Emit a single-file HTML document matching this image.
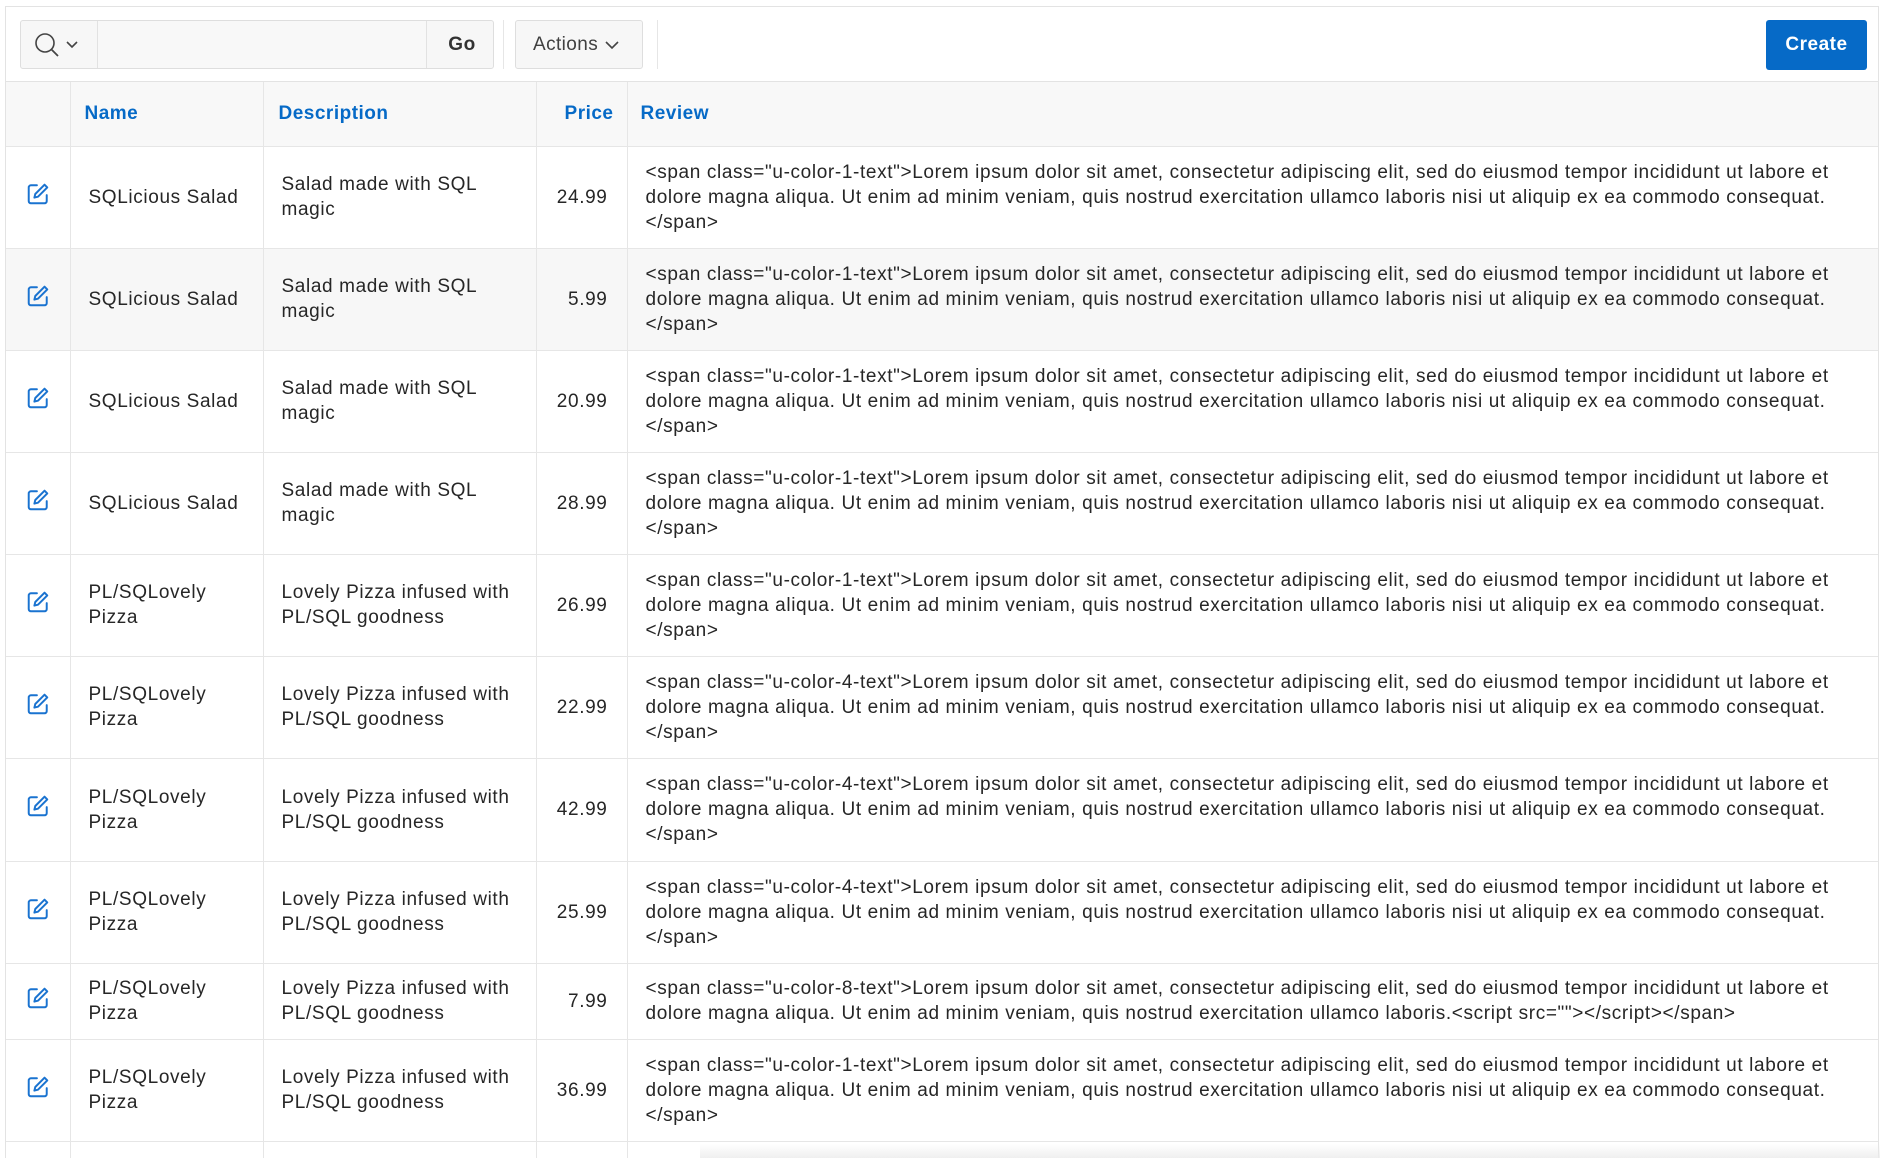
<!DOCTYPE html>
<html><head><meta charset="utf-8"><style>
*{box-sizing:border-box;margin:0;padding:0}
html,body{width:1880px;height:1158px;overflow:hidden}
body{background:#fff;font-family:"Liberation Sans",sans-serif;color:#262626;font-size:19px;letter-spacing:0.63px;position:relative}
.frame{position:absolute;left:5px;top:6px;width:1874px;height:1152px;border:1px solid #e3e3e3;border-bottom:none;background:#fff;overflow:hidden}
.tb{position:absolute;left:0;top:0;width:100%;height:75px;border-bottom:1px solid #e3e3e3}
.sg{position:absolute;left:14px;top:13px;width:474px;height:49px;border:1px solid #dedede;border-radius:3px;background:#f7f7f7}
.sg .in{position:absolute;left:76px;top:0;width:330px;height:47px;background:#f8f8f8;border-left:1px solid #e2e2e2;border-right:1px solid #e2e2e2}
.go{position:absolute;right:0;top:0;width:62px;height:47px;text-align:center;line-height:47px;font-weight:bold;font-size:19px;color:#333;letter-spacing:0.5px}
.sep{position:absolute;top:13px;width:1px;height:49px;background:#e6e6e6}
.act{position:absolute;left:509px;top:13px;width:128px;height:49px;border:1px solid #dedede;border-radius:3px;background:#f7f7f7;line-height:47px;padding-left:17px;font-size:19px;color:#404040;letter-spacing:0.4px}
.cr{position:absolute;left:1760px;top:13px;width:101px;height:50px;background:#066ac7;border-radius:3px;color:#fff;font-weight:bold;font-size:19px;text-align:center;line-height:50px;letter-spacing:0.5px}
table{position:absolute;left:0;top:75px;border-collapse:collapse;table-layout:fixed;width:1874px}
th,td{border:1px solid #e6e6e6;vertical-align:middle;line-height:25px}
tr>*:first-child{border-left:none}
th{height:64px;background:#f8f8f8;color:#066ac7;font-weight:bold;text-align:left;padding:0 14px;font-size:19px;border-top:none;letter-spacing:0.5px}
td{padding:0 18px;white-space:nowrap}
td.p,th.p{text-align:right;padding-right:19px}
td.e{padding:0;text-align:center}
tr.g td{background:#f7f7f7}
.shade{position:absolute;left:700px;bottom:0;width:1180px;height:14px;background:linear-gradient(rgba(255,255,255,0),rgba(235,235,235,.8))}
</style></head><body>
<div class="frame">
<div class="tb">
 <div class="sg">
  <svg style="position:absolute;left:12px;top:10px" width="54" height="28" viewBox="0 0 54 28"><circle cx="12" cy="12" r="9" fill="none" stroke="#444" stroke-width="1.6"/><line x1="18.5" y1="18.5" x2="25" y2="25" stroke="#444" stroke-width="1.8"/><polyline points="34,11 39,16 44,11" fill="none" stroke="#444" stroke-width="1.6"/></svg>
  <div class="in"></div>
  <div class="go">Go</div>
 </div>
 <div class="sep" style="left:497px"></div>
 <div class="act">Actions <svg width="16" height="10" viewBox="0 0 16 10"><polyline points="2,2 8,8 14,2" fill="none" stroke="#444" stroke-width="1.6"/></svg></div>
 <div class="sep" style="left:651px"></div>
 <div class="cr">Create</div>
</div>
<table>
<colgroup><col style="width:64px"><col style="width:193px"><col style="width:273px"><col style="width:91px"><col></colgroup>
<tbody>
<tr><th></th><th>Name</th><th style="padding-left:15px">Description</th><th class="p" style="padding-right:13px">Price</th><th style="padding-left:13px">Review</th></tr>
</tbody>
</table>
</div>
<script>
var rows=[
["SQLicious Salad","Salad made with SQL<br>magic","24.99",1,102,0],
["SQLicious Salad","Salad made with SQL<br>magic","5.99",1,102,1],
["SQLicious Salad","Salad made with SQL<br>magic","20.99",1,102,0],
["SQLicious Salad","Salad made with SQL<br>magic","28.99",1,102,0],
["PL/SQLovely<br>Pizza","Lovely Pizza infused with<br>PL/SQL goodness","26.99",1,102,0],
["PL/SQLovely<br>Pizza","Lovely Pizza infused with<br>PL/SQL goodness","22.99",4,102,0],
["PL/SQLovely<br>Pizza","Lovely Pizza infused with<br>PL/SQL goodness","42.99",4,103,0],
["PL/SQLovely<br>Pizza","Lovely Pizza infused with<br>PL/SQL goodness","25.99",4,102,0],
["PL/SQLovely<br>Pizza","Lovely Pizza infused with<br>PL/SQL goodness","7.99",8,76,0],
["PL/SQLovely<br>Pizza","Lovely Pizza infused with<br>PL/SQL goodness","36.99",1,102,0],
["","","",0,60,0]];
var ic='<svg width="24" height="24" viewBox="0 0 22 22"><path d="M10 3H4.5A2 2 0 0 0 2.5 5v12.5a2 2 0 0 0 2 2H17a2 2 0 0 0 2-2V12" fill="none" stroke="#1a73d0" stroke-width="1.8" stroke-linecap="round"/><path d="M17 2.5l2.5 2.5L11 13.5l-3.3.8.8-3.3z" fill="none" stroke="#1a73d0" stroke-width="1.8" stroke-linejoin="round"/></svg>';
var h='';
rows.forEach(function(r){
 var rev='';
 if(r[3]){var a='&lt;span class="u-color-'+r[3]+'-text"&gt;Lorem ipsum dolor sit amet, consectetur adipiscing elit, sed do eiusmod tempor incididunt ut labore et<br>dolore magna aliqua. Ut enim ad minim veniam, quis nostrud exercitation ullamco laboris';
 rev=r[3]==8?a+'.&lt;script src=""&gt;&lt;/script&gt;&lt;/span&gt;':a+' nisi ut aliquip ex ea commodo consequat.<br>&lt;/span&gt;';}
 h+='<tr'+(r[5]?' class="g"':'')+' style="height:'+r[4]+'px"><td class="e">'+(r[3]?ic:'')+'</td><td>'+r[0]+'</td><td>'+r[1]+'</td><td class="p">'+r[2]+'</td><td>'+rev+'</td></tr>';
});
document.querySelector('table tbody').insertAdjacentHTML('beforeend',h);
</script>
<div class="shade"></div>
</body></html>
